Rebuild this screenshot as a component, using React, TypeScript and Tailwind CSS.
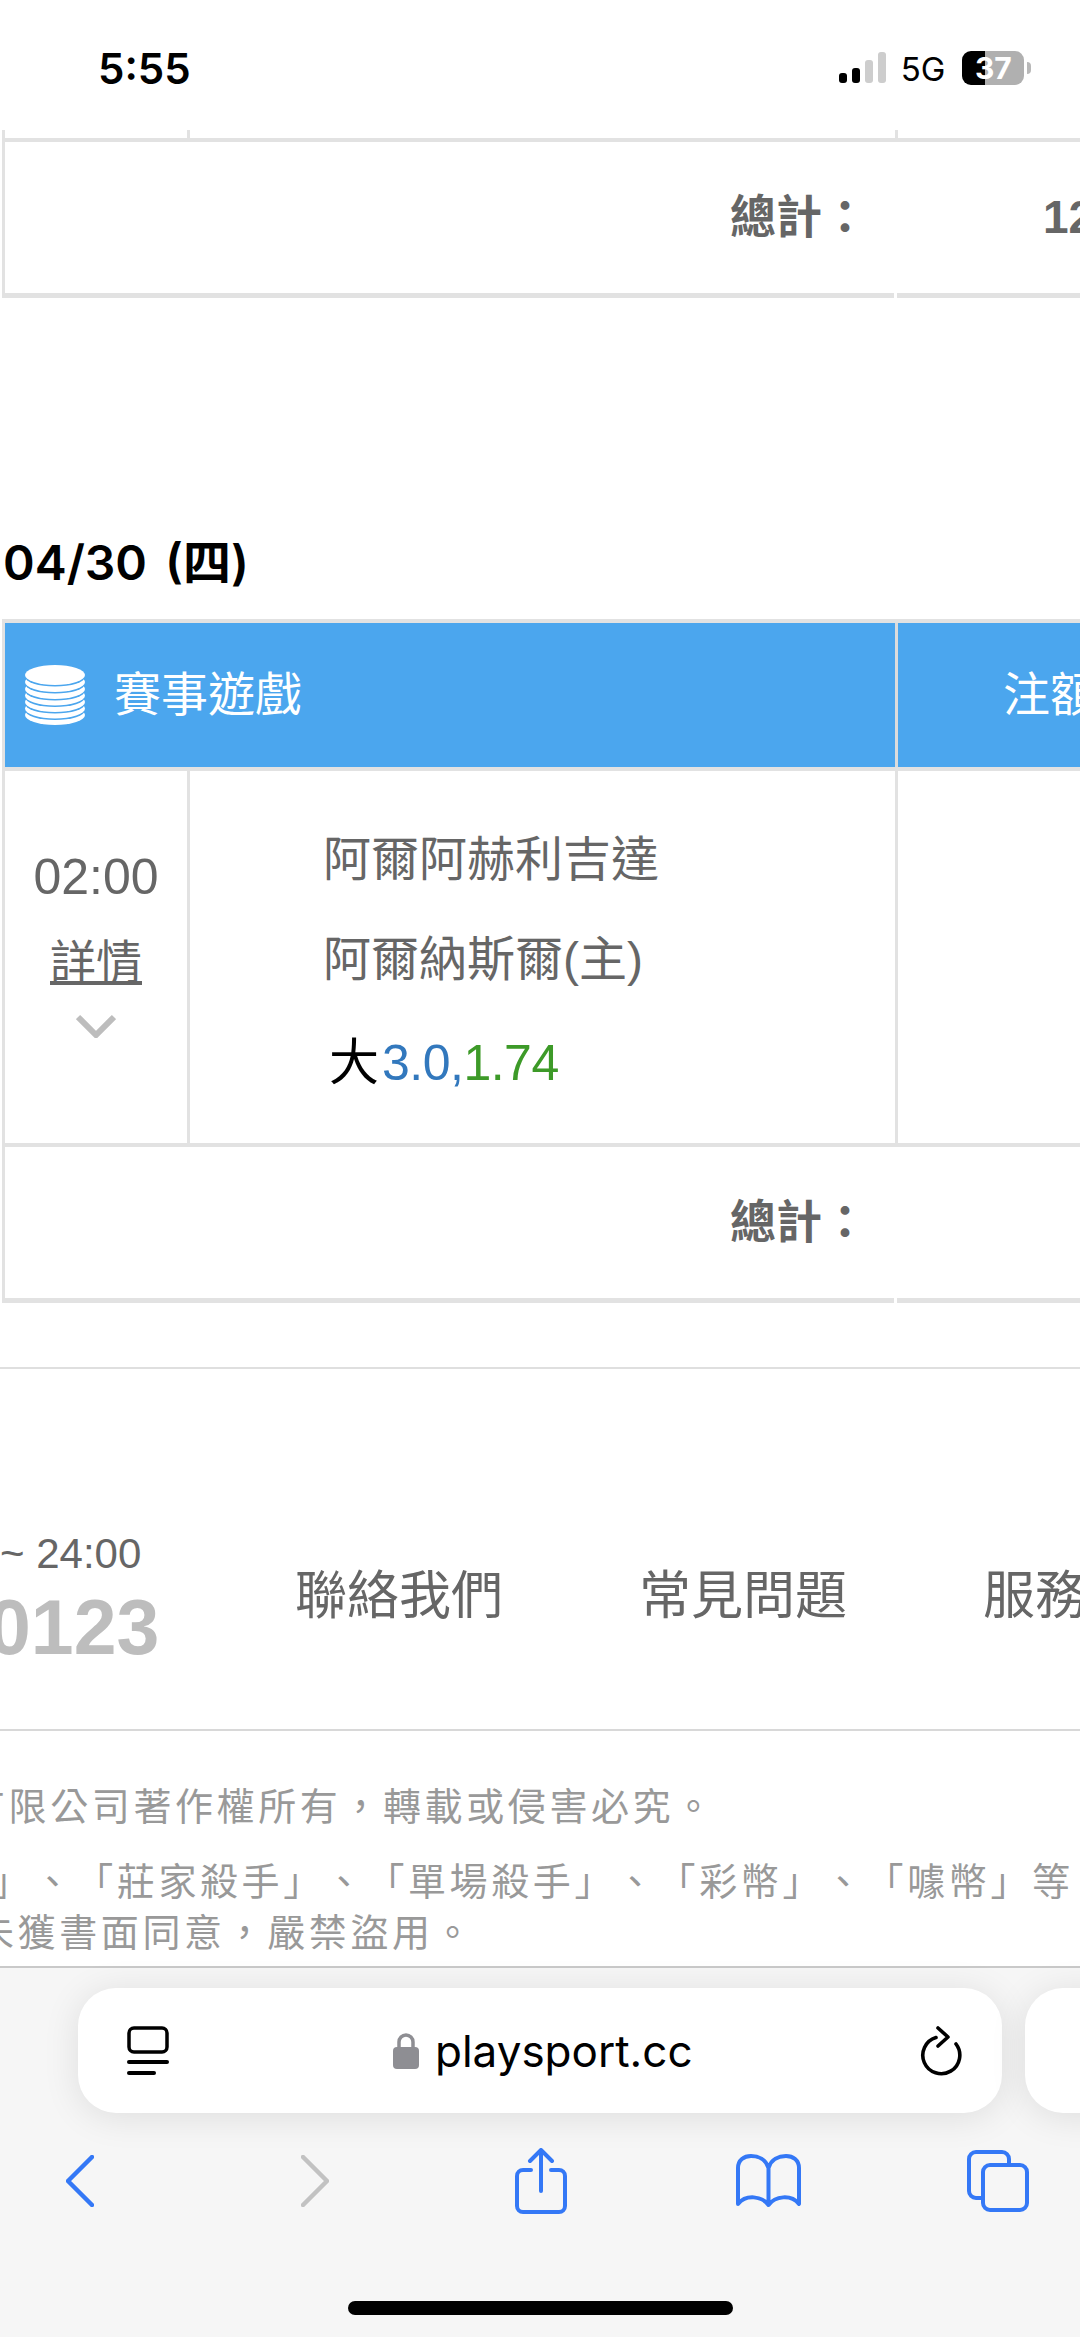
const cjk = "font-['Liberation_Sans','Noto_Sans_CJK_TC',sans-serif]";

function StatusBar() {
  return (
    <div className="h-[130px] shrink-0 flex items-start bg-white font-['Inter',sans-serif]">
      <div className="ml-[98px] mt-[45px] text-[42px] leading-[48px] font-semibold text-black">5:55</div>
      {/* Signal, 2 of 4 bars */}
      <svg className="ml-[648px] mt-[52px]" width="47" height="31" viewBox="0 0 47 31">
        <rect x="0" y="21" width="8" height="10" rx="3" fill="#000" />
        <rect x="13" y="16" width="8" height="15" rx="3" fill="#000" />
        <rect x="26" y="8" width="8" height="23" rx="3" fill="#cdcdcd" />
        <rect x="39" y="0" width="8" height="31" rx="3" fill="#cdcdcd" />
      </svg>
      <div className="ml-[15px] mt-[50px] text-[33px] leading-[38px] font-normal text-black">5G</div>
      <div className="ml-[17px] mt-[51px] w-[62px] h-[34px] rounded-[9px] flex items-center justify-center text-[30px] leading-none font-bold text-white bg-[linear-gradient(to_right,#000_37%,#b0b0b0_37%)]">
        37
      </div>
      <div className="ml-[3px] mt-[62px] w-[4px] h-[12px] rounded-r-full bg-[#b8b8b8]" />
    </div>
  );
}

function TotalRow({ value }: { value?: string }) {
  return (
    <div>
      <div className="h-[151px] border-l-[3px] border-[#e2e2e2] flex items-center text-[#666] font-bold text-[46px]">
        <div className={`ml-[725px] w-[200px] ${cjk}`}>總計：</div>
        {value && <div className="ml-[113px] font-['Liberation_Sans',sans-serif] text-[46px]">{value}</div>}
      </div>
      <div className="flex h-[5px] gap-[3px]">
        <div className="w-[892px] bg-[#e2e2e2]" />
        <div className="flex-1 bg-[#e2e2e2]" />
      </div>
    </div>
  );
}

function CoinStack() {
  const bands = [50, 43.5, 37, 30.5, 24, 17, 10];
  return (
    <svg width="60" height="60" viewBox="0 0 60 60">
      {bands.map((y) => (
        <g key={y}>
          <ellipse cx="30" cy={y + 1.6} rx="30" ry="10" fill="#4ba6ee" />
          <ellipse cx="30" cy={y} rx="30" ry="10" fill="#fff" />
        </g>
      ))}
    </svg>
  );
}

function FirstTable() {
  return (
    <div className="w-[1200px] ml-[2px]">
      <div className="flex h-[8px]">
        <div className="w-[185px] border-l-[3px] border-[#e2e2e2]" />
        <div className="w-[708px] border-l-[3px] border-[#e2e2e2]" />
        <div className="flex-1 border-l-[3px] border-[#e2e2e2]" />
      </div>
      <div className="h-[4px] bg-[#e2e2e2]" />
      <TotalRow value="12" />
    </div>
  );
}

function GameTable() {
  return (
    <div className={`w-[1200px] ml-[2px] ${cjk}`}>
      <div className="h-[4px] bg-[#e2e2e2]" />
      <div className="flex h-[144px] border-l-[3px] border-[#e2e2e2]">
        <div className="w-[890px] bg-[#4ba6ee] flex items-center text-white text-[47px]">
          <div className="ml-[20px] flex items-center gap-[29px]">
            <CoinStack />
            <span>賽事遊戲</span>
          </div>
        </div>
        <div className="flex-1 border-l-[3px] border-[#dcdcdc] bg-[#4ba6ee] flex items-center text-white text-[47px]">
          <span className="ml-[105px]">注額</span>
        </div>
      </div>
      <div className="h-[4px] bg-[#e2e2e2]" />
      <div className="flex h-[372px]">
        <div className="w-[185px] border-l-[3px] border-[#e2e2e2] flex flex-col items-center text-[#666]">
          <div className="mt-[79px] text-[50px] leading-[54px] font-['Liberation_Sans',sans-serif]">02:00</div>
          <div className="mt-[28px] text-[46px] leading-[60px] underline underline-offset-[3px]">詳情</div>
          <svg className="mt-[22px]" width="40" height="24" viewBox="0 0 40 24" fill="none" stroke="#bdbdbd" strokeWidth="6">
            <path d="M2 3 L20 21 L38 3" />
          </svg>
        </div>
        <div className="w-[708px] border-l-[3px] border-[#e2e2e2] pl-[133px] text-[#666]">
          <div className="mt-[59px] text-[48px] leading-[60px]">阿爾阿赫利吉達</div>
          <div className="mt-[40px] text-[48px] leading-[60px]">阿爾納斯爾(主)</div>
          <div className="mt-[43px] ml-[6px] text-[50px] leading-[60px]">
            <span className="text-black">大</span>
            <span className="ml-[3px] tracking-[-0.5px] text-[#3278bd]">3.0,</span>
            <span className="tracking-[-0.5px] text-[#3d9a28]">1.74</span>
          </div>
        </div>
        <div className="flex-1 border-l-[3px] border-[#e2e2e2]" />
      </div>
      <div className="h-[4px] bg-[#e2e2e2]" />
      <TotalRow />
    </div>
  );
}

function Footer() {
  return (
    <div className={`${cjk}`}>
      <div className="h-[2px] bg-[#dfdfdf]" />
      <div className="flex h-[360px] overflow-hidden whitespace-nowrap">
        <div className="w-[295px] shrink-0 pt-[160px]">
          <div className="text-[42px] leading-[50px] text-[#666]">~ 24:00</div>
          <div className="mt-[8px] ml-[-12px] text-[77px] leading-[80px] font-bold text-[#bdbdbd]">0123</div>
        </div>
        <div className="pt-[197px] flex gap-[136px] text-[52px] leading-[60px] text-[#666]">
          <span>聯絡我們</span>
          <span>常見問題</span>
          <span>服務條款</span>
        </div>
      </div>
      <div className="h-[2px] bg-[#d8d8d8]" />
      <div className="whitespace-nowrap text-[38px] tracking-[3.6px] text-[#999] [text-spacing-trim:space-all]">
        <div className="mt-[51px] ml-[-33px] leading-[50px]">有限公司著作權所有，轉載或侵害必究。</div>
        <div className="mt-[25px] ml-[-8px] leading-[51px]">」、「莊家殺手」、「單場殺手」、「彩幣」、「噱幣」等</div>
        <div className="ml-[-24px] leading-[51px]">未獲書面同意，嚴禁盜用。</div>
      </div>
    </div>
  );
}

function SafariBar() {
  return (
    <div className="mt-auto h-[371px] shrink-0 border-t-2 border-[#c9c9c9] bg-[#f6f6f6] flex flex-col">
      <div className="mt-[20px] ml-[78px] flex gap-[23px] w-[1100px]">
        <div className="w-[924px] h-[125px] shrink-0 rounded-[38px] bg-white shadow-[0_4px_36px_rgba(0,0,0,0.1)] flex items-center">
          {/* Tab overview */}
          <svg className="ml-[49px]" width="42" height="50" viewBox="0 0 42 50" fill="none" stroke="#000" strokeLinecap="round">
            <rect x="2" y="2" width="38" height="24" rx="5" strokeWidth="3.5" />
            <path d="M2 36 H40" strokeWidth="4" />
            <path d="M2 47 H27" strokeWidth="4" />
          </svg>
          <svg className="ml-[224px]" width="26" height="36" viewBox="0 0 26 36">
            <path d="M6 15 V9 a7 7 0 0 1 14 0 V15" fill="none" stroke="#8e8e93" strokeWidth="3.5" />
            <rect x="0" y="14" width="26" height="22" rx="4" fill="#8e8e93" />
          </svg>
          <div className="ml-[16px] text-[44px] leading-[56px] text-black font-['Inter',sans-serif]">playsport.cc</div>
          <svg className="ml-[227px]" width="42" height="50" viewBox="0 0 42 50" fill="none" stroke="#000" strokeWidth="3.6" strokeLinecap="round" strokeLinejoin="round">
            <path d="M16 11.5 A18.5 18.5 0 1 0 36 18" />
            <path d="M18 2 L28 11 L18 20" />
          </svg>
        </div>
        <div className="w-[200px] h-[125px] shrink-0 rounded-[38px] bg-white shadow-[0_4px_36px_rgba(0,0,0,0.1)]" />
      </div>
      <div className="mt-[35px] h-[65px] flex items-center">
        {/* Back */}
        <svg className="ml-[66px]" width="28" height="52" viewBox="0 0 28 52" fill="none" stroke="#3478f6" strokeWidth="4.5" strokeLinecap="round" strokeLinejoin="round">
          <path d="M26 2 L2 26 L26 50" />
        </svg>
        {/* Forward */}
        <svg className="ml-[207px]" width="28" height="52" viewBox="0 0 28 52" fill="none" stroke="#c2c2c2" strokeWidth="4.5" strokeLinecap="round" strokeLinejoin="round">
          <path d="M2 2 L26 26 L2 50" />
        </svg>
        {/* Share */}
        <svg className="ml-[186px]" width="52" height="66" viewBox="0 0 52 66" fill="none" stroke="#3478f6" strokeWidth="4" strokeLinecap="round" strokeLinejoin="round">
          <path d="M16 22 H8 a6 6 0 0 0 -6 6 V58 a6 6 0 0 0 6 6 H44 a6 6 0 0 0 6 -6 V28 a6 6 0 0 0 -6 -6 H36" />
          <path d="M26 43 V3" />
          <path d="M15 13 L26 2 L37 13" />
        </svg>
        {/* Bookmarks */}
        <svg className="ml-[169px]" width="65" height="54" viewBox="0 0 65 54" fill="none" stroke="#3478f6" strokeWidth="4" strokeLinecap="round" strokeLinejoin="round">
          <path d="M32.5 51 V14 C30 5 22 2 15 2 C8 2 2 6 2 14 V50 C10 40 26 42 32.5 51 C39 42 55 40 63 50 V14 C63 6 57 2 50 2 C43 2 35 5 32.5 14" />
        </svg>
        {/* Tabs */}
        <svg className="ml-[166px]" width="62" height="62" viewBox="0 0 62 62" fill="none" stroke="#3478f6" strokeWidth="4" strokeLinejoin="round">
          <path d="M15 48 H9 a7 7 0 0 1 -7 -7 V9 a7 7 0 0 1 7 -7 H35 a7 7 0 0 1 7 7 V15" />
          <rect x="16" y="15" width="44" height="45" rx="7" />
        </svg>
      </div>
      <div className="mt-auto mb-[22px] ml-[348px] w-[385px] h-[14px] rounded-full bg-black" />
    </div>
  );
}

export default function App() {
  return (
    <div className="w-[1080px] h-[2337px] overflow-hidden bg-white flex flex-col">
      <StatusBar />
      <FirstTable />
      <div className="mt-[235px] ml-[3px] h-[60px] text-[48px] leading-[60px] font-semibold text-black whitespace-nowrap [word-spacing:6px] font-['Inter','Noto_Sans_CJK_TC',sans-serif]">
        04/30 (四)
      </div>
      <div className="mt-[26px]">
        <GameTable />
      </div>
      <div className="mt-[64px]">
        <Footer />
      </div>
      <SafariBar />
    </div>
  );
}
